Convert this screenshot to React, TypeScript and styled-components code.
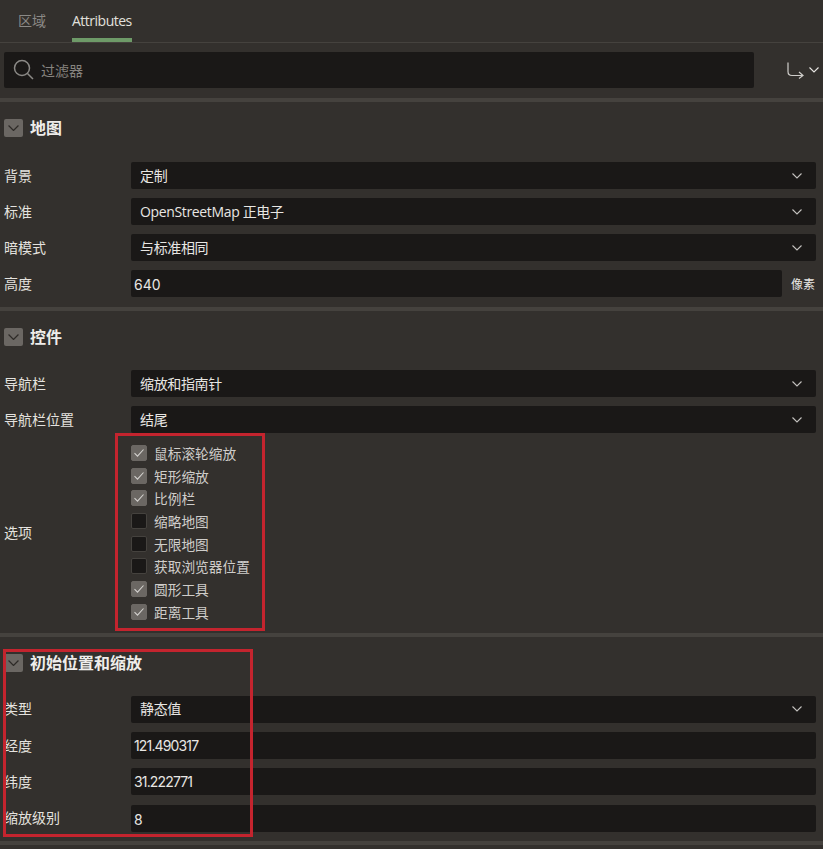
import React from "react";
import styled, { createGlobalStyle } from "styled-components";

const Global = createGlobalStyle`
  html, body { margin: 0; padding: 0; background: #33302d; }
  body { font-family: "Open Sans", "Noto Sans CJK SC", sans-serif; font-size: 14px; color: #e8e6e3; }
`;

const Page = styled.div`
  position: relative;
  width: 823px;
  height: 849px;
  overflow: hidden;
  background: #33302d;
`;

const Tabs = styled.div`
  display: flex;
  height: 42px;
  padding-left: 18px;
  gap: 26px;
  border-bottom: 1px solid #45423e;
`;

const Tab = styled.div<{ $active?: boolean }>`
  height: 42px;
  box-sizing: border-box;
  line-height: 42px;
  font-size: 14px;
  letter-spacing: ${(p) => (p.$active ? "-0.5px" : "0")};
  color: ${(p) => (p.$active ? "#e2e0dd" : "#8b8986")};
  border-bottom: 4px solid ${(p) => (p.$active ? "#6e9a68" : "transparent")};
`;

const FilterBar = styled.div`
  display: flex;
  align-items: center;
  height: 55px;
  box-sizing: border-box;
  padding: 0 4px 1px;
`;

const Search = styled.div`
  display: flex;
  align-items: center;
  gap: 6px;
  width: 751px;
  height: 36px;
  box-sizing: border-box;
  padding-left: 9px;
  background: #1a1817;
  border-radius: 2px;
  color: #86837f;
`;

const FilterMenu = styled.div`
  display: flex;
  align-items: center;
  gap: 5px;
  margin-left: 33px;
`;

const Section = styled.section<{ $bottom?: number }>`
  border-top: 4px solid #45423e;
  padding: 17px 0 ${(p) => p.$bottom ?? 9}px;
`;

const Head = styled.div<{ $after: number }>`
  display: flex;
  align-items: center;
  gap: 7px;
  height: 18px;
  padding-left: 4px;
  margin-bottom: ${(p) => p.$after}px;
`;

const Toggle = styled.div`
  display: flex;
  align-items: center;
  justify-content: center;
  width: 19px;
  height: 18px;
  background: #6b6763;
  border-radius: 2px;
  color: #2e2b28;
`;

const Title = styled.h2`
  margin: 0;
  padding-bottom: 2px;
  font-size: 16px;
  font-weight: 700;
  color: #efedea;
`;

const Rows = styled.div<{ $gap?: number }>`
  display: grid;
  grid-template-columns: 127px 1fr;
  row-gap: ${(p) => p.$gap ?? 9}px;
  padding-left: 4px;
  padding-right: 7px;
  align-items: center;
`;

const Label = styled.div`
  padding-bottom: 2px;
  font-size: 14px;
  color: #e4e2df;
`;

const Select = styled.div`
  display: flex;
  align-items: center;
  justify-content: space-between;
  height: 27px;
  box-sizing: border-box;
  padding: 0 14px 2px 9px;
  background: #1a1817;
  border-radius: 2px;
  font-size: 14px;
  letter-spacing: -0.35px;
  color: #e8e6e3;
  svg { color: #c4c2bf; margin-top: 2px; }
`;

const InputWrap = styled.div`
  display: flex;
  align-items: center;
  gap: 9px;
`;

const Input = styled.div<{ $tight?: boolean }>`
  flex: 1;
  height: 27px;
  box-sizing: border-box;
  padding-left: 3px;
  line-height: ${(p) => (p.$tight ? "28px" : "30px")};
  background: #1a1817;
  border-radius: 2px;
  font-family: Inter, sans-serif;
  font-size: 14px;
  letter-spacing: ${(p) => (p.$tight ? "-0.85px" : "0")};
  color: #e8e6e3;
`;

const Unit = styled.span`
  font-size: 12px;
  color: #e8e6e3;
  width: 25px;
`;

const Checks = styled.div`
  display: flex;
  flex-direction: column;
  margin: 3px 0 4px;
  gap: 6.7px;
`;

const Check = styled.div`
  display: flex;
  align-items: center;
  gap: 7px;
  height: 16px;
  font-size: 13.7px;
  color: #cfcdca;
`;

const Box = styled.span<{ $on: boolean }>`
  display: flex;
  align-items: center;
  justify-content: center;
  width: 16px;
  height: 16px;
  box-sizing: border-box;
  border-radius: 2px;
  background: ${(p) => (p.$on ? "#6b6763" : "#1a1817")};
  border: 1px solid ${(p) => (p.$on ? "#6b6763" : "#45423e")};
  color: #d4d2cf;
`;

const Mark = styled.div<{ $x: number; $y: number; $w: number; $h: number }>`
  position: absolute;
  left: ${(p) => p.$x}px;
  top: ${(p) => p.$y}px;
  width: ${(p) => p.$w}px;
  height: ${(p) => p.$h}px;
  box-sizing: border-box;
  border: 3px solid #c4242e;
  pointer-events: none;
`;

const Chevron = ({ size = 10 }: { size?: number }) => (
  <svg width={size} height={size * 0.6} viewBox="0 0 10 6" fill="none" stroke="currentColor" strokeWidth="1.1">
    <path d="M0.5 0.5 5 5 9.5 0.5" />
  </svg>
);

const Tick = () => (
  <svg width="12" height="10" viewBox="0 0 12 10" fill="none" stroke="currentColor" strokeWidth="1.1">
    <path d="M1.5 5.2 4.5 8.2 10.5 1.5" />
  </svg>
);

const SelectRow = ({ label, value }: { label: string; value: string }) => (
  <>
    <Label>{label}</Label>
    <Select>
      {value}
      <Chevron />
    </Select>
  </>
);

const InputRow = ({ label, value, unit, tight }: { label: string; value: string; unit?: string; tight?: boolean }) => (
  <>
    <Label>{label}</Label>
    <InputWrap>
      <Input $tight={tight}>{value}</Input>
      {unit && <Unit>{unit}</Unit>}
    </InputWrap>
  </>
);

const options: [string, boolean][] = [
  ["鼠标滚轮缩放", true],
  ["矩形缩放", true],
  ["比例栏", true],
  ["缩略地图", false],
  ["无限地图", false],
  ["获取浏览器位置", false],
  ["圆形工具", true],
  ["距离工具", true],
];

const SectionHead = ({ title, after = 24 }: { title: string; after?: number }) => (
  <Head $after={after}>
    <Toggle>
      <Chevron size={11} />
    </Toggle>
    <Title>{title}</Title>
  </Head>
);

export default function App() {
  return (
    <Page>
      <Global />
      <Tabs>
        <Tab>区域</Tab>
        <Tab $active>Attributes</Tab>
      </Tabs>
      <FilterBar>
        <Search>
          <svg width="22" height="22" viewBox="0 0 22 22" fill="none" stroke="#8b8986" strokeWidth="1.5">
            <circle cx="9" cy="9" r="7.5" />
            <path d="M14.5 14.5 20 20" />
          </svg>
          过滤器
        </Search>
        <FilterMenu>
          <svg width="17" height="17" viewBox="0 0 17 17" fill="none" stroke="#cfcdca" strokeWidth="1.2">
            <path d="M1 0.5V9.5Q1 13.5 5 13.5H16M12 10 16 13.5 12 16.5" />
          </svg>
          <Chevron />
        </FilterMenu>
      </FilterBar>
      <Section $bottom={10}>
        <SectionHead title="地图" after={25} />
        <Rows>
          <SelectRow label="背景" value="定制" />
          <SelectRow label="标准" value="OpenStreetMap 正电子" />
          <SelectRow label="暗模式" value="与标准相同" />
          <InputRow label="高度" value="640" unit="像素" />
        </Rows>
      </Section>
      <Section>
        <SectionHead title="控件" />
        <Rows>
          <SelectRow label="导航栏" value="缩放和指南针" />
          <SelectRow label="导航栏位置" value="结尾" />
          <Label>选项</Label>
          <Checks>
            {options.map(([t, on]) => (
              <Check key={t}>
                <Box $on={on}>{on && <Tick />}</Box>
                {t}
              </Check>
            ))}
          </Checks>
        </Rows>
      </Section>
      <Section>
        <SectionHead title="初始位置和缩放" />
        <Rows $gap={9.34}>
          <SelectRow label="类型" value="静态值" />
          <InputRow label="经度" value="121.490317" tight />
          <InputRow label="纬度" value="31.222771" tight />
          <InputRow label="缩放级别" value="8" />
        </Rows>
      </Section>
      <Section />
      <Mark $x={115} $y={433} $w={150} $h={198} />
      <Mark $x={3} $y={649} $w={250} $h={188} />
    </Page>
  );
}
